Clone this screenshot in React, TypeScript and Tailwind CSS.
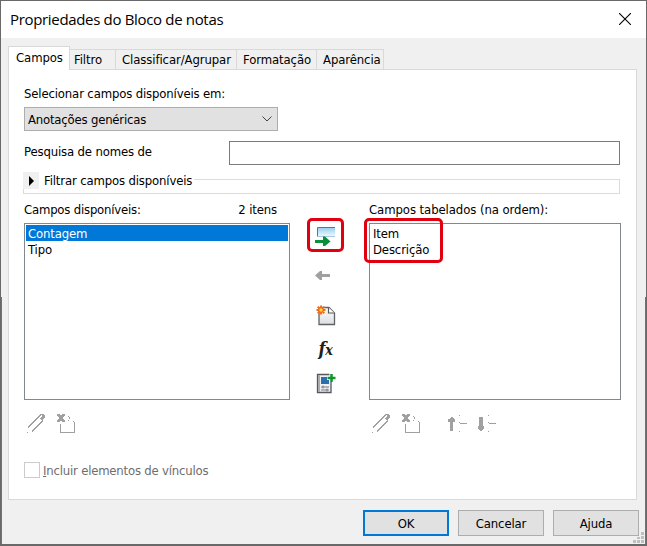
import React from "react";

const tahoma = "font-['DejaVu_Sans_Condensed','DejaVu_Sans',sans-serif] [font-stretch:condensed]";

function Tab({ label, className }: { label: string; className: string }) {
  return (
    <div className={`h-[21px] border-t border-r border-[#d9d9d9] pt-[2px] ${className}`}>{label}</div>
  );
}

function PencilIcon() {
  return (
    <svg width="20" height="22" viewBox="0 0 20 22" shapeRendering="crispEdges" className="shrink-0">
      <path d="M2 14.500L14.500 2M6 18.500L17 7.500" stroke="#a0a0a0" fill="none" />
      <path d="M14 1h4v1h1v3h-1v1h-1v1h-2V6h-1V5h1V4h1V2h-2z" fill="#a0a0a0" />
      <path d="M1 19h1v1H1z" fill="#a0a0a0" />
    </svg>
  );
}

function DeleteIcon() {
  return (
    <svg width="20" height="22" viewBox="0 0 20 22" shapeRendering="crispEdges" className="shrink-0">
      <path d="M1 1h3v1h2v-1h3v2H8v1H7v2h1v1h1v2H6V8H4v1H1V7h1V6h1V4H2V3H1z" fill="#a0a0a0" />
      <path d="M4 11h1v8h13V9h1v11H4zM12 3h1v1h-1zM13 4h1v2h-1zM12 7h1v1h-1zM17 8h1v1h-1z" fill="#a0a0a0" />
    </svg>
  );
}

function MoveIcon({ down = false }: { down?: boolean }) {
  return (
    <svg width="20" height="22" viewBox="0 0 20 22" shapeRendering="crispEdges" className="shrink-0">
      <path
        d={down ? "M3 4h4v9h1v3H7v1H6v1H4v-1H3v-1H2v-3h1z" : "M4 4h2v1h1v1h1v3H6v9H3V9H1V6h2V5h1z"}
        fill="#a0a0a0"
      />
      <path d="M12 2h1v1h-1zM12 9h1v1h7v1h-7v-1h-1zM12 18h1v1h-1z" fill="#a0a0a0" />
    </svg>
  );
}

export default function App() {
  return (
    <div className={`relative flex h-[546px] w-[647px] flex-col border border-b-2 border-[#6a696a] bg-[#f0f0f0] text-[13px] leading-4 tracking-[-0.15px] text-black ${tahoma}`}>
      <header className="flex h-[37px] shrink-0 justify-between bg-white pr-[15px] pl-[9px]">
        <h1 className="pt-[8px] font-['Open_Sans',sans-serif] text-[15px] leading-5 tracking-[-0.33px] [font-stretch:normal] whitespace-nowrap">Propriedades do Bloco de notas</h1>
        <svg width="12" height="12" viewBox="0 0 12 12" className="mt-[12px]"><path d="M0 0L12 12M12 0L0 12" stroke="#000" strokeWidth="1.1" /></svg>
      </header>

      <nav className="relative z-10 mt-[8px] ml-[7px] flex h-[24px] shrink-0 items-end tracking-[-0.1px] whitespace-nowrap">
        <div className="h-[24px] w-[62px] border border-b-0 border-[#d9d9d9] bg-white pt-[3px] pl-[7px]">Campos</div>
        <Tab label="Filtro" className="w-[46px] pl-[4px]" />
        <Tab label="Classificar/Agrupar" className="w-[121px] pl-[6px]" />
        <Tab label="Formatação" className="w-[80px] pl-[6px]" />
        <Tab label="Aparência" className="w-[67px] pl-[6px]" />
      </nav>

      <main className="mt-[-1px] ml-[7px] flex h-[431px] w-[629px] shrink-0 flex-col border border-[#d9d9d9] bg-white pl-[15px]">
        <div className="mt-[16px]">Selecionar campos disponíveis em:</div>
        <div className="mt-[5px] flex h-[24px] w-[254px] shrink-0 items-center justify-between border border-[#adadad] bg-[#e1e1e1] pr-[5px] pl-[3px]">
          <span className="pt-px tracking-[-0.2px]">Anotações genéricas</span>
          <svg width="10" height="6" viewBox="0 0 10 6"><path d="M.5.5L5 5L9.500.5" fill="none" stroke="#444" /></svg>
        </div>
        <div className="mt-[10px] flex h-[24px] shrink-0">
          <span className="w-[205px] pt-[3px]">Pesquisa de nomes de</span>
          <div className="h-[24px] w-[391px] border border-[#7a7a7a]" />
        </div>
        <fieldset className="mt-[7px] ml-[-1px] flex h-[22px] w-[597px] shrink-0 flex-col">
          <div className="flex h-[17px] items-center">
            <div className="flex h-[17px] w-[16px] items-center justify-center bg-[#f0f0f0]">
              <svg width="5" height="10" viewBox="0 0 5 10"><path d="M0 0L5 5L0 10z" /></svg>
            </div>
            <span className="ml-[5px] w-[150px] whitespace-nowrap">Filtrar campos disponíveis</span>
            <div className="h-[10px] flex-1 self-end border-t border-r border-[#dcdcdc]" />
          </div>
          <div className="h-[5px] border border-t-0 border-[#dcdcdc]" />
        </fieldset>

        <div className="mt-[8px] flex h-[198px] shrink-0">
          <section className="w-[266px]">
            <div className="flex h-[21px] justify-between pr-[13px]"><span className="tracking-[-0.2px]">Campos disponíveis:</span><span>2 itens</span></div>
            <div className="h-[177px] border border-[#828790] p-px">
              <div className="h-[16px] bg-[#0078d7] pt-px pl-[2px] text-white">Contagem</div>
              <div className="h-[16px] pt-px pl-[2px]">Tipo</div>
            </div>
          </section>

          <div className="flex w-[79px] flex-col items-center pt-[16px] pr-[8px]">
            <div className="flex h-[34px] w-[37px] shrink-0 items-center justify-center rounded-[5px] border-[3px] border-[#e1000f]">
              <svg width="21" height="22" viewBox="0 0 21 22" className="shrink-0">
                <defs><linearGradient id="field" x1="0" y1="0" x2="0" y2="1"><stop stopColor="#8fcbed" /><stop offset="1" stopColor="#f3fafd" /></linearGradient></defs>
                <path d="M2.500 3H20v9.500H2.500z" fill="url(#field)" />
                <path d="M20 3.500H2.500V12.500" fill="none" stroke="#2588bd" />
                <path d="M3 12.500H20" stroke="#a9c9d8" />
                <path d="M0 16h8v-3.500h2l5.500 5-5.500 4.500H8v-3H0z" fill="#0a8f3c" />
              </svg>
            </div>
            <svg width="15" height="9" viewBox="0 0 15 9" className="mt-[19px] ml-[-6px] shrink-0"><path d="M0 4.500L5 0H7V3H15V6H7V9H5z" fill="#a0a0a0" /></svg>
            <svg width="20" height="21" viewBox="0 0 20 21" className="mt-[25px] shrink-0">
              <defs><linearGradient id="page" x1="0" y1="0" x2="0" y2="1"><stop stopColor="#fdfdfd" /><stop offset="1" stopColor="#dcdee2" /></linearGradient></defs>
              <path d="M3 3V19.500H18.500V8L13 2.500H7z" fill="url(#page)" stroke="#606266" strokeWidth="1.3" />
              <path d="M12.500 2.500V8H18.500" fill="#fff" stroke="#55585c" strokeWidth="1.2" />
              <path d="M5 .5V9.500M.5 5H9.500M1.700 1.700L8.300 8.300M8.300 1.700L1.700 8.300" stroke="#f26a13" strokeWidth="1.900" /><circle cx="5" cy="5" r="1.700" fill="#ffd04a" />
            </svg>
            <span className="mt-[13px] flex h-[20px] items-baseline font-['DejaVu_Serif',serif] text-[18px] leading-5 font-bold text-[#202020] italic">
              <span>f</span><span className="text-[14px]">x</span>
            </span>
            <svg width="20" height="21" viewBox="0 0 20 21" className="mt-[14px] shrink-0">
              <path d="M1.500 1.500h13.500v18h-13.500z" fill="#eef0f2" stroke="#55595e" strokeWidth="1.3" />
              <path d="M2 2h2v17H2z" fill="#a9adb2" />
              <path d="M5 4h8v7H5z" fill="#2b70ad" />
              <path d="M5 14h8M5 17h8M7 12.500v3M11 15.500v3" stroke="#74787d" />
              <path d="M15.500 0v9M11 5h8.500" stroke="#fff" strokeWidth="4" /><path d="M15.500 1v8M11.500 5h8" stroke="#13932b" strokeWidth="2.500" />
            </svg>
          </div>

          <section className="w-[252px]">
            <div className="h-[21px] tracking-[-0.08px]">Campos tabelados (na ordem):</div>
            <div className="relative h-[177px] border border-[#828790] pt-[2px] pl-[3px]">
              <div className="h-[16px]">Item</div>
              <div>Descrição</div>
              <div className="absolute top-[-6px] left-[-6px] h-[45px] w-[79px] rounded-[5px] border-[3px] border-[#e1000f]" />
            </div>
          </section>
        </div>

        <div className="mt-[13px] flex h-[22px] shrink-0 pl-[2px]">
          <PencilIcon /><span className="w-[10px]" /><DeleteIcon />
          <span className="w-[295px]" /><PencilIcon /><span className="w-[10px]" /><DeleteIcon />
          <span className="w-[26px]" /><MoveIcon /><span className="w-[9px]" /><MoveIcon down />
        </div>
        <div className="mt-[27px] flex h-[16px] items-center tracking-[-0.2px] text-[#6d6d6d]">
          <span className="mr-[3px] h-[16px] w-[16px] border border-[#ccc] bg-white" />
          <span className="pt-px"><u>I</u>ncluir elementos de vínculos</span>
        </div>
      </main>

      <footer className="mt-[10px] flex h-[26px] shrink-0 gap-[9px] pl-[362px]">
        <button className="h-[26px] w-[86px] border-2 border-[#0078d7] bg-[#e1e1e1] pt-px">OK</button>
        <button className="h-[26px] w-[86px] border border-[#adadad] bg-[#e1e1e1] pt-px">Cancelar</button>
        <button className="h-[26px] w-[86px] border border-[#adadad] bg-[#e1e1e1] pt-px">Ajuda</button>
      </footer>
      <svg width="11" height="11" viewBox="0 0 11 11" className="absolute right-[2px] bottom-px" fill="#bfbfbf"><path d="M8 0h3v3H8zM4 5h3v2H4zM8 4h3v3H8zM0 8h3v3H0zM4 8h3v3H4zM8 8h3v3H8z" /></svg>
      <div className="pointer-events-none absolute inset-x-0 top-[296px] bottom-0 border-x border-[#747374]" />
    </div>
  );
}
